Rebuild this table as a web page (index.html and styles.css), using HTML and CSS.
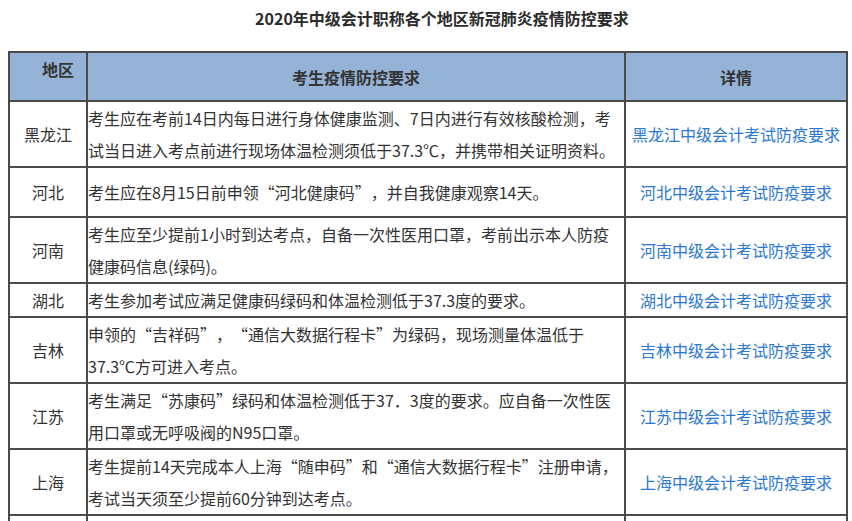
FILE: index.html
```html
<!DOCTYPE html>
<html lang="zh-CN">
<head>
<meta charset="utf-8">
<title>2020年中级会计职称各个地区新冠肺炎疫情防控要求</title>
<link rel="stylesheet" href="styles.css">
</head>
<body>
<div class="page">
  <p class="title">2020年中级会计职称各个地区新冠肺炎疫情防控要求</p>
  <table class="req">
    <colgroup>
      <col class="c-area">
      <col class="c-text">
      <col class="c-link">
    </colgroup>
    <thead>
      <tr class="r-head">
        <th class="h-area">地区</th>
        <th>考生疫情防控要求</th>
        <th>详情</th>
      </tr>
    </thead>
    <tbody>
      <tr class="r-2 r-first">
        <td class="area">黑龙江</td>
        <td class="text">考生应在考前14日内每日进行身体健康监测、7日内进行有效核酸检测，考试当日进入考点前进行现场体温检测须低于37.3℃，并携带相关证明资料。</td>
        <td class="link"><a href="#">黑龙江中级会计考试防疫要求</a></td>
      </tr>
      <tr class="r-mid">
        <td class="area">河北</td>
        <td class="text">考生应在8月15日前申领“河北健康码”，并自我健康观察14天。</td>
        <td class="link"><a href="#">河北中级会计考试防疫要求</a></td>
      </tr>
      <tr class="r-2">
        <td class="area">河南</td>
        <td class="text">考生应至少提前1小时到达考点，自备一次性医用口罩，考前出示本人防疫健康码信息(绿码)。</td>
        <td class="link"><a href="#">河南中级会计考试防疫要求</a></td>
      </tr>
      <tr class="r-1">
        <td class="area">湖北</td>
        <td class="text">考生参加考试应满足健康码绿码和体温检测低于37.3度的要求。</td>
        <td class="link"><a href="#">湖北中级会计考试防疫要求</a></td>
      </tr>
      <tr class="r-2">
        <td class="area">吉林</td>
        <td class="text">申领的“吉祥码”，“通信大数据行程卡”为绿码，现场测量体温低于37.3℃方可进入考点。</td>
        <td class="link"><a href="#">吉林中级会计考试防疫要求</a></td>
      </tr>
      <tr class="r-2">
        <td class="area">江苏</td>
        <td class="text">考生满足“苏康码”绿码和体温检测低于37．3度的要求。应自备一次性医用口罩或无呼吸阀的N95口罩。</td>
        <td class="link"><a href="#">江苏中级会计考试防疫要求</a></td>
      </tr>
      <tr class="r-2">
        <td class="area">上海</td>
        <td class="text">考生提前14天完成本人上海“随申码”和“通信大数据行程卡”注册申请，考试当天须至少提前60分钟到达考点。</td>
        <td class="link"><a href="#">上海中级会计考试防疫要求</a></td>
      </tr>
      <tr class="r-2">
        <td class="area">浙江</td>
        <td class="text">考生应提前申领“浙江健康码”，考试当天凭绿码进入考点，并配合现场体温检测。</td>
        <td class="link"><a href="#">浙江中级会计考试防疫要求</a></td>
      </tr>
    </tbody>
  </table>
</div>
</body>
</html>
```

FILE: styles.css
```css
html, body {
  margin: 0;
  padding: 0;
  background: #ffffff;
}

body {
  font-family: "Noto Sans CJK SC", "Noto Sans", "Liberation Sans", sans-serif;
  font-size: 16px;
  color: #333333;
  text-spacing-trim: space-all;
}

.page {
  padding: 6px 8px 0 8px;
}

.title {
  margin: 0 0 21px 0;
  line-height: 24px;
  font-weight: bold;
  text-align: center;
  text-indent: 2em;
  color: #2b2b2b;
}

.req {
  width: 838px;
  border-collapse: collapse;
  table-layout: fixed;
}

.c-area { width: 78px; }
.c-text { width: 538px; }
.c-link { width: 222px; }

.req th,
.req td {
  border: 2px solid #4a4a4a;
  padding: 0 1px;
  line-height: 32px;
  vertical-align: middle;
}

.req th {
  background: #95b3d7;
  font-weight: bold;
  color: #333333;
  text-align: center;
}

.req th.h-area {
  text-align: left;
  vertical-align: top;
  text-indent: 2em;
  padding: 0;
}

.r-head { height: 49px; }
.r-2 { height: 66px; }
.r-mid { height: 50px; }
.r-1 { height: 34px; }

.area {
  text-align: center;
}

.req td.text {
  text-align: left;
  padding: 0;
}

.link {
  text-align: center;
}

.link a {
  color: #2b78d2;
  text-decoration: none;
}
```
